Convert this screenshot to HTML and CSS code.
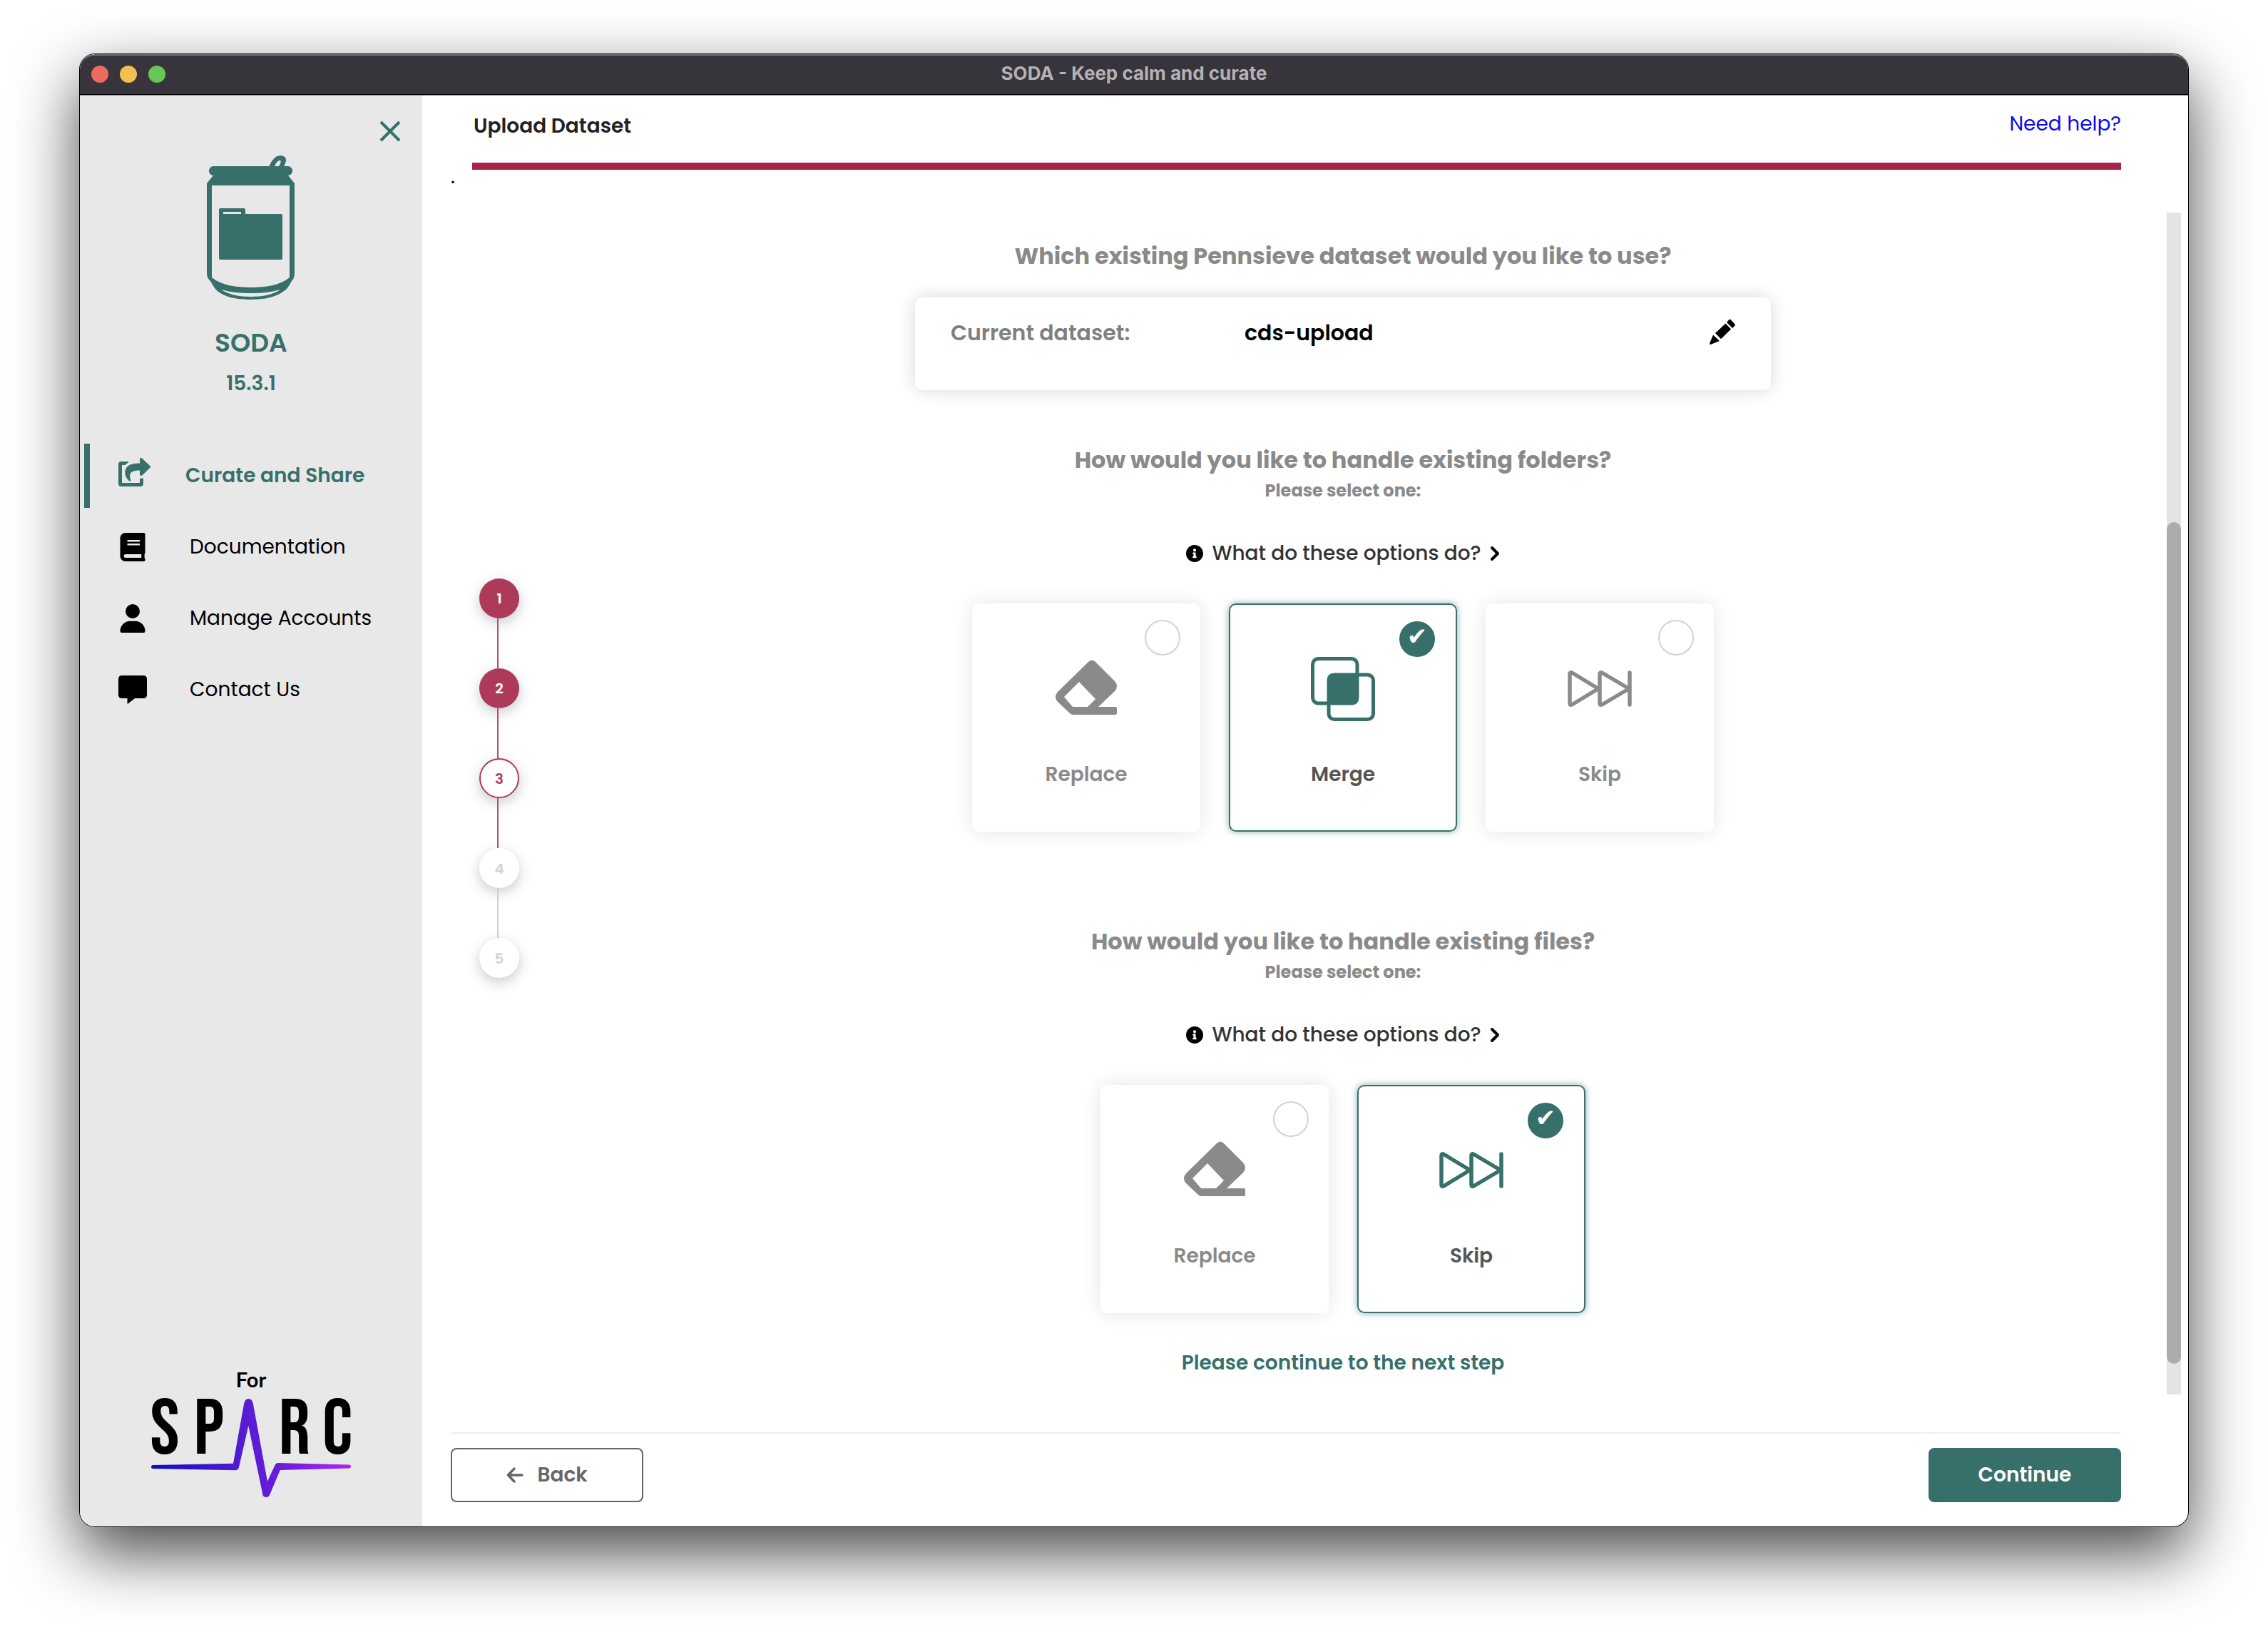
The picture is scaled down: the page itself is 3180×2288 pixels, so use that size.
FILE: index.html
```html
<!DOCTYPE html>
<html lang="en">
<head>
<meta charset="utf-8">
<meta name="viewport" content="width=device-width, initial-scale=1">
<title>SODA - Keep calm and curate</title>
<link rel="stylesheet" href="styles.css">
</head>
<body>
<svg class="sprite" aria-hidden="true">
  <symbol id="icon-eraser" viewBox="0 0 90 90">
    <path fill="currentColor" fill-rule="evenodd" d="M48 7Q53 2 58 7L85 34Q91 41 85 48L62 70H86Q88 70 88 72V79Q88 81 86 81H27Q24 81 22 79L5 63Q-1 56 5 49ZM35 35L14 56L26 70H47L58 59Z"/>
  </symbol>
  <symbol id="icon-merge" viewBox="0 0 90 90">
    <rect x="2.5" y="2.5" width="62.5" height="62.5" rx="8" fill="none" stroke="currentColor" stroke-width="5"/>
    <rect x="25" y="25" width="62.5" height="62.5" rx="8" fill="none" stroke="currentColor" stroke-width="5"/>
    <rect x="23" y="23" width="44" height="44" rx="8" fill="currentColor"/>
  </symbol>
  <symbol id="icon-skip" viewBox="0 0 90 90">
    <g fill="none" stroke="currentColor" stroke-width="5.5" stroke-linejoin="round" stroke-linecap="round">
      <path d="M3 24Q3 21 6 22L43 44.500L6 67Q3 68 3 65Z"/>
      <path d="M45 24Q45 21 48 22L86 44.500L48 67Q45 68 45 65Z"/>
      <path d="M87 22V67"/>
    </g>
  </symbol>
  <symbol id="icon-info" viewBox="8 8 496 496">
    <path fill="currentColor" d="M256 8C119.043 8 8 119.083 8 256c0 136.997 111.043 248 248 248s248-111.003 248-248C504 119.083 392.957 8 256 8zm0 110c23.196 0 42 18.804 42 42s-18.804 42-42 42-42-18.804-42-42 18.804-42 42-42zm56 254c0 6.627-5.373 12-12 12h-88c-6.627 0-12-5.373-12-12v-24c0-6.627 5.373-12 12-12h12v-64h-12c-6.627 0-12-5.373-12-12v-24c0-6.627 5.373-12 12-12h64c6.627 0 12 5.373 12 12v100h12c6.627 0 12 5.373 12 12v24z"/>
  </symbol>
  <symbol id="icon-chevron" viewBox="0 0 14 24">
    <path d="M3 4L11 12L3 20" fill="none" stroke="currentColor" stroke-width="4" stroke-linecap="round" stroke-linejoin="round"/>
  </symbol>
</svg>

<div class="window">
  <header class="titlebar">
    <div class="lights">
      <span class="light light-close"></span>
      <span class="light light-min"></span>
      <span class="light light-max"></span>
    </div>
    <span class="titlebar-text">SODA - Keep calm and curate</span>
  </header>

  <div class="app">
    <aside class="sidebar">
      <button class="close" type="button" aria-label="Close menu">
        <svg width="30" height="30" viewBox="0 0 30 30"><path d="M2 2L28 28M28 2L2 28" stroke="currentColor" stroke-width="4"/></svg>
      </button>
      <svg class="can" width="124" height="202" viewBox="0 0 124 202" fill="currentColor" fill-rule="evenodd" aria-hidden="true">
        <path d="M87 16C90 9 95 0 103 0C109 0 112 4 111 8L108 16ZM95 15C97 11 99 7 102 7C105 7 104 10 101 15Z"/>
        <path d="M9 15H114C122 16 122 27 114 28L123 39V165Q123 172 119 176Q116 182 112 187C99 199 80 202 61 202C43 202 22 199 11 186L5 176Q0 172 0 165V39L9 28C1 27 1 16 9 15ZM7 42V171C20 182 42 185 62 185C82 185 103 182 116 171V42ZM20 188C31 195 45 198 62 198C78 198 93 195 103 188C89 192 77 193 62 193C47 193 34 192 20 188Z"/>
        <path d="M19 74H52Q54 74 54 76V82H104Q106 82 106 84V144Q106 146 104 146H19Q17 146 17 144V76Q17 74 19 74ZM23 79V82H48V79Z"/>
      </svg>
      <h1 class="brand">SODA</h1>
      <p class="version">15.3.1</p>
      <nav class="nav">
        <a class="nav-item active" href="#curate">
          <svg width="45" height="50" viewBox="0 0 576 640"><path fill="currentColor" d="M568.482 177.448L424.479 313.433C409.3 327.768 384 317.14 384 295.985v-71.963c-144.575.97-205.566 35.113-164.775 171.353 4.483 14.973-12.846 26.567-25.006 17.33C155.252 383.105 120 326.488 120 269.339c0-143.937 117.599-172.5 264-173.312V24.012c0-21.174 25.317-31.768 40.479-17.448l144.003 135.988c10.02 9.463 10.028 25.425 0 34.896zM384 379.128V448H64V128h50.916a11.99 11.99 0 0 0 8.648-3.693c14.953-15.568 32.237-27.89 51.014-37.676C185.708 80.83 181.584 64 169.033 64H48C21.49 64 0 85.49 0 112v352c0 26.51 21.49 48 48 48h352c26.51 0 48-21.49 48-48v-88.806c0-8.288-8.197-14.066-16.011-11.302a71.83 71.83 0 0 1-34.189 3.377c-7.27-1.046-13.8 4.514-13.8 11.859z"/></svg>
          <span>Curate and Share</span>
        </a>
        <a class="nav-item" href="#documentation">
          <svg width="40" height="40" viewBox="-32 0 512 512"><path fill="currentColor" d="M448 360V24c0-13.300-10.700-24-24-24H96C43 0 0 43 0 96v320c0 53 43 96 96 96h328c13.300 0 24-10.700 24-24v-16c0-7.500-3.500-14.300-8.900-18.700-4.200-15.400-4.200-59.300 0-74.700 5.400-4.300 8.900-11.100 8.900-18.600zM128 134c0-3.300 2.700-6 6-6h212c3.300 0 6 2.700 6 6v20c0 3.300-2.700 6-6 6H134c-3.300 0-6-2.700-6-6v-20zm0 64c0-3.300 2.700-6 6-6h212c3.300 0 6 2.700 6 6v20c0 3.300-2.700 6-6 6H134c-3.300 0-6-2.700-6-6v-20zm253.400 250H96c-17.700 0-32-14.300-32-32 0-17.600 14.400-32 32-32h285.400c-1.900 17.100-1.900 46.900 0 64z"/></svg>
          <span>Documentation</span>
        </a>
        <a class="nav-item" href="#accounts">
          <svg width="40" height="40" viewBox="-32 0 512 512" fill="currentColor"><circle cx="224" cy="128" r="128"/><path d="M178.300 304C79.800 304 0 383.800 0 482.300C0 498.700 13.300 512 29.700 512H418.300c16.400 0 29.700-13.300 29.700-29.700C448 383.800 368.200 304 269.700 304H178.300z"/></svg>
          <span>Manage Accounts</span>
        </a>
        <a class="nav-item" href="#contact">
          <svg width="40" height="40" viewBox="0 0 40 40"><path fill="currentColor" d="M5 0H35Q40 0 40 5V27Q40 32 35 32H23L13.500 39.500Q12.500 40 12.500 39V32H5Q0 32 0 27V5Q0 0 5 0Z"/></svg>
          <span>Contact Us</span>
        </a>
      </nav>
      <div class="sponsor">
        <p class="for">For</p>
        <svg class="sparc-logo" width="300" height="138" viewBox="-10 0 300 138" role="img" aria-label="SPARC">
          <defs>
            <linearGradient id="pulse" gradientUnits="userSpaceOnUse" x1="0" y1="0" x2="280" y2="0">
              <stop offset="0" stop-color="#0d0db8"/>
              <stop offset="0.48" stop-color="#581cd4"/>
              <stop offset="0.65" stop-color="#6a1cdc"/>
              <stop offset="1" stop-color="#ab29f0"/>
            </linearGradient>
          </defs>
          <g class="sparc" text-anchor="middle">
            <text x="19" y="77">S</text>
            <text x="81" y="77">P</text>
            <text x="201" y="77">R</text>
            <text x="261" y="77">C</text>
          </g>
          <path fill="url(#pulse)" d="M2 93L115 90.700L130.300 6Q132 0 136.500 0Q141 0 142.700 6L163 116L173.500 93Q175 90 178 90L278 92.500Q280 93 280 95Q280 97 278 97.500L180.700 100L166 135Q164.500 138 161.300 138Q157.500 138 156.500 135L136.300 38L123 96Q122 100.300 118 100.300L2 98Q0 98 0 95.500Q0 93 2 93Z"/>
        </svg>
      </div>
    </aside>

    <main class="main">
      <div class="page-head">
        <h2 class="page-title">Upload Dataset</h2>
        <a class="help" href="#help">Need help?</a>
      </div>
      <p class="dot">.</p>

      <div class="body">
        <ol class="steps">
          <li class="step done"><span>1</span></li>
          <li class="step done"><span>2</span></li>
          <li class="step current"><span>3</span></li>
          <li class="step"><span>4</span></li>
          <li class="step"><span>5</span></li>
        </ol>

        <div class="content">
          <section class="question">
            <h3 class="question-title">Which existing Pennsieve dataset would you like to use?</h3>
            <div class="dataset">
              <span class="dataset-label">Current dataset:</span>
              <span class="dataset-name">cds-upload</span>
              <button class="edit" type="button" aria-label="Change dataset">
                <svg width="36" height="36" viewBox="0 0 36 36" fill="currentColor"><path d="M0 34.500L5 22.500L14 31L1.500 36Q0 36 0 34.500ZM8 20L22.500 6.500L30 14.500L16 28.300ZM24 5L27.500 1Q28.500 0 29.500 1L35.500 7.500Q36.300 8.500 35.500 9.500L32 13Z"/></svg>
              </button>
            </div>
          </section>

          <section class="question">
            <h3 class="question-title">How would you like to handle existing folders?</h3>
            <p class="hint">Please select one:</p>
            <button class="explain" type="button">
              <svg width="24" height="24"><use href="#icon-info"/></svg>
              <span>What do these options do?</span>
              <svg width="14" height="24"><use href="#icon-chevron"/></svg>
            </button>
            <div class="options">
              <label class="option"><input type="radio" name="folders"><svg width="90" height="90"><use href="#icon-eraser"/></svg><span>Replace</span></label>
              <label class="option selected"><input type="radio" name="folders" checked><svg width="90" height="90"><use href="#icon-merge"/></svg><span>Merge</span></label>
              <label class="option"><input type="radio" name="folders"><svg width="90" height="90"><use href="#icon-skip"/></svg><span>Skip</span></label>
            </div>
          </section>

          <section class="question files">
            <h3 class="question-title">How would you like to handle existing files?</h3>
            <p class="hint">Please select one:</p>
            <button class="explain" type="button">
              <svg width="24" height="24"><use href="#icon-info"/></svg>
              <span>What do these options do?</span>
              <svg width="14" height="24"><use href="#icon-chevron"/></svg>
            </button>
            <div class="options">
              <label class="option"><input type="radio" name="files"><svg width="90" height="90"><use href="#icon-eraser"/></svg><span>Replace</span></label>
              <label class="option selected"><input type="radio" name="files" checked><svg width="90" height="90"><use href="#icon-skip"/></svg><span>Skip</span></label>
            </div>
          </section>

          <p class="proceed">Please continue to the next step</p>
        </div>

        <div class="track" aria-hidden="true"><div class="thumb"></div></div>
      </div>

      <footer class="footer">
        <button class="btn btn-back" type="button">
          <svg width="24" height="24" viewBox="0 0 24 24"><path d="M22 12H3M11 3L2.500 12L11 21" fill="none" stroke="currentColor" stroke-width="3.500" stroke-linecap="round" stroke-linejoin="round"/></svg>
          <span>Back</span>
        </button>
        <button class="btn btn-continue" type="button">Continue</button>
      </footer>
    </main>
  </div>
</div>
</body>
</html>
```
FILE: styles.css
```css
:root {
  --teal: #37706b;
  --crimson: #a72549;
  --step: #ae3a59;
  --gray: #8a8a8a;
}

* {
  box-sizing: border-box;
  margin: 0;
  padding: 0;
}

body {
  display: flex;
  min-height: 100vh;
  padding: 75px 111px 147px;
  background: #fff;
  font-family: Poppins, Inter, "Noto Sans", sans-serif;
  font-size: 28px;
  line-height: 40px;
  color: #000;
}

button {
  border: 0;
  background: none;
  font: inherit;
  color: inherit;
  cursor: pointer;
}

svg {
  display: block;
  flex: none;
}

.sprite {
  position: absolute;
  width: 0;
  height: 0;
}

/* Window frame */
.window {
  flex: 1;
  display: flex;
  flex-direction: column;
  overflow: hidden;
  border: 1px solid #000;
  border-radius: 22px;
  background: #fff;
  box-shadow: 0 36px 90px rgba(0, 0, 0, 0.72);
}

.titlebar {
  position: relative;
  display: flex;
  align-items: center;
  justify-content: center;
  height: 57px;
  padding-bottom: 4px;
  background: #38343b;
  border-top: 2px solid #737076;
  border-bottom: 1px solid #000;
  border-radius: 21px 21px 0 0;
}

.lights {
  position: absolute;
  left: 16px;
  top: 14px;
  display: flex;
  gap: 16px;
}

.light {
  width: 24px;
  height: 24px;
  border-radius: 50%;
}

.light-close { background: #ec6a5e; }
.light-min { background: #f4bf50; }
.light-max { background: #66c656; }

.titlebar-text {
  font-family: Inter, sans-serif;
  font-size: 26px;
  font-weight: 700;
  color: #b3b1b4;
}

.app {
  flex: 1;
  display: flex;
  border-top: 1px solid #8a8a8a;
}

/* Sidebar */
.sidebar {
  width: 480px;
  flex: none;
  display: flex;
  flex-direction: column;
  align-items: center;
  padding: 35px 0 41px;
  background: #e8e8e8;
}

.close {
  align-self: flex-end;
  margin-right: 30px;
  color: var(--teal);
}

.can {
  margin-top: 19px;
  color: var(--teal);
}

.brand {
  margin-top: 37px;
  font-size: 36px;
  line-height: 48px;
  font-weight: 600;
  color: var(--teal);
}

.version {
  margin-top: 13px;
  font-weight: 600;
  color: var(--teal);
}

.nav {
  align-self: stretch;
  display: flex;
  flex-direction: column;
  gap: 10px;
  margin-top: 64px;
  padding-left: 6px;
}

.nav-item {
  display: flex;
  align-items: center;
  gap: 60px;
  height: 90px;
  padding-left: 40px;
  border-left: 8px solid transparent;
  color: #000;
  text-decoration: none;
}

.nav-item.active {
  gap: 49px;
  border-left-color: var(--teal);
  color: var(--teal);
  font-weight: 600;
}

.sponsor {
  display: flex;
  flex-direction: column;
  align-items: center;
  gap: 7px;
  margin-top: auto;
}

.for {
  font-family: Lato, sans-serif;
  font-size: 29px;
  font-weight: 700;
}

.sparc-logo {
  overflow: visible;
}

.sparc {
  font-family: "Bebas Neue", "Barlow Condensed", "Roboto Condensed", sans-serif;
  font-size: 110px;
  font-weight: 400;
}

/* Main column */
.main {
  flex: 1;
  min-width: 0;
  display: flex;
  flex-direction: column;
  padding: 0 10px 34px 40px;
}

.page-head {
  display: flex;
  align-items: center;
  justify-content: space-between;
  height: 104px;
  margin: 0 84px 0 30px;
  padding-bottom: 8px;
  border-bottom: 10px solid var(--crimson);
}

.page-title {
  padding-left: 2px;
  font-size: 28px;
  font-weight: 600;
  color: #222;
}

.help {
  padding-bottom: 6px;
  color: #0a0aee;
  text-decoration: none;
}

.dot {
  height: 60px;
  line-height: 20px;
}

.body {
  flex: 1;
  display: flex;
}

/* Step indicator */
.steps {
  width: 96px;
  padding: 513px 0 0 40px;
  list-style: none;
}

.step span {
  display: flex;
  align-items: center;
  justify-content: center;
  width: 56px;
  height: 56px;
  padding-top: 2px;
  border-radius: 50%;
  background: #fff;
  box-shadow: 0 6px 18px rgba(60, 70, 90, 0.28);
  font-size: 20px;
  font-weight: 600;
  color: #d2d2d2;
}

.step:not(:last-child)::after {
  content: "";
  display: block;
  width: 2px;
  height: 70px;
  margin-left: 25px;
  background: #cfcfd4;
}

.step.done span {
  padding-top: 0;
  background: var(--step);
  color: #fff;
}

.step.current span {
  border: 2px solid var(--step);
  color: var(--step);
}

.step.done::after,
.step.current:not(:last-child)::after {
  background: #b84e6b;
}

/* Questions */
.content {
  flex: 1;
  display: flex;
  flex-direction: column;
  align-items: center;
  padding-top: 41px;
}

.question {
  display: flex;
  flex-direction: column;
  align-items: center;
}

.question + .question {
  margin-top: 78px;
}

.question + .question.files {
  margin-top: 134px;
}

.question-title {
  font-size: 32px;
  font-weight: 700;
  color: var(--gray);
}

.dataset {
  display: grid;
  grid-template-columns: 412px 1fr auto;
  align-items: start;
  width: 1200px;
  max-width: 100%;
  height: 130px;
  margin-top: 38px;
  padding: 30px 50px 0;
  border-radius: 10px;
  box-shadow: 0 0 24px rgba(0, 0, 0, 0.16);
  font-size: 30px;
  font-weight: 600;
}

.dataset-label {
  color: #808080;
}

.hint {
  margin-top: 7px;
  font-size: 24px;
  line-height: 32px;
  font-weight: 700;
  color: var(--gray);
}

.explain {
  display: flex;
  align-items: center;
  gap: 12px;
  margin-top: 52px;
}

.explain span {
  font-weight: 500;
  color: #333;
}

.options {
  display: flex;
  gap: 40px;
  margin-top: 50px;
}

.option {
  position: relative;
  display: flex;
  flex-direction: column;
  align-items: center;
  gap: 55px;
  width: 320px;
  height: 320px;
  padding-top: 73px;
  border: 2px solid #fff;
  border-radius: 10px;
  box-shadow: 0 0 28px rgba(0, 0, 0, 0.11);
  font-weight: 600;
  color: var(--gray);
  cursor: pointer;
}

.option input {
  position: absolute;
  top: 21px;
  right: 26px;
  display: flex;
  justify-content: center;
  width: 50px;
  height: 50px;
  appearance: none;
  border: 2px solid #d3d3d3;
  border-radius: 50%;
}

.option input:checked {
  top: 23px;
  right: 29px;
  border-color: var(--teal);
  background: var(--teal);
}

.option input:checked::after {
  content: "\2714";
  font-family: "DejaVu Sans", sans-serif;
  font-size: 34px;
  line-height: 38px;
  color: #fff;
}

.option.selected {
  border-color: var(--teal);
  box-shadow: 0 0 10px rgba(55, 112, 107, 0.6);
  color: var(--teal);
}

.option.selected span {
  color: #555;
}

.proceed {
  margin-top: 50px;
  font-weight: 600;
  color: var(--teal);
}

/* Scroll indicator */
.track {
  display: flex;
  flex-direction: column;
  width: 20px;
  background: #e4e4e4;
}

.track::before {
  content: "";
  flex: 434;
}

.track::after {
  content: "";
  flex: 43;
}

.thumb {
  flex: 1180;
  border-radius: 10px;
  background: #acacac;
}

/* Footer */
.footer {
  display: flex;
  justify-content: space-between;
  margin: 53px 84px 0 0;
  padding-top: 20px;
  border-top: 2px solid #efefef;
}

.btn {
  display: flex;
  align-items: center;
  justify-content: center;
  gap: 19px;
  width: 270px;
  height: 76px;
  border-radius: 8px;
  font-weight: 600;
}

.btn-back {
  border: 2px solid #666;
  color: #666;
}

.btn-continue {
  background: var(--teal);
  color: #fff;
}
```
